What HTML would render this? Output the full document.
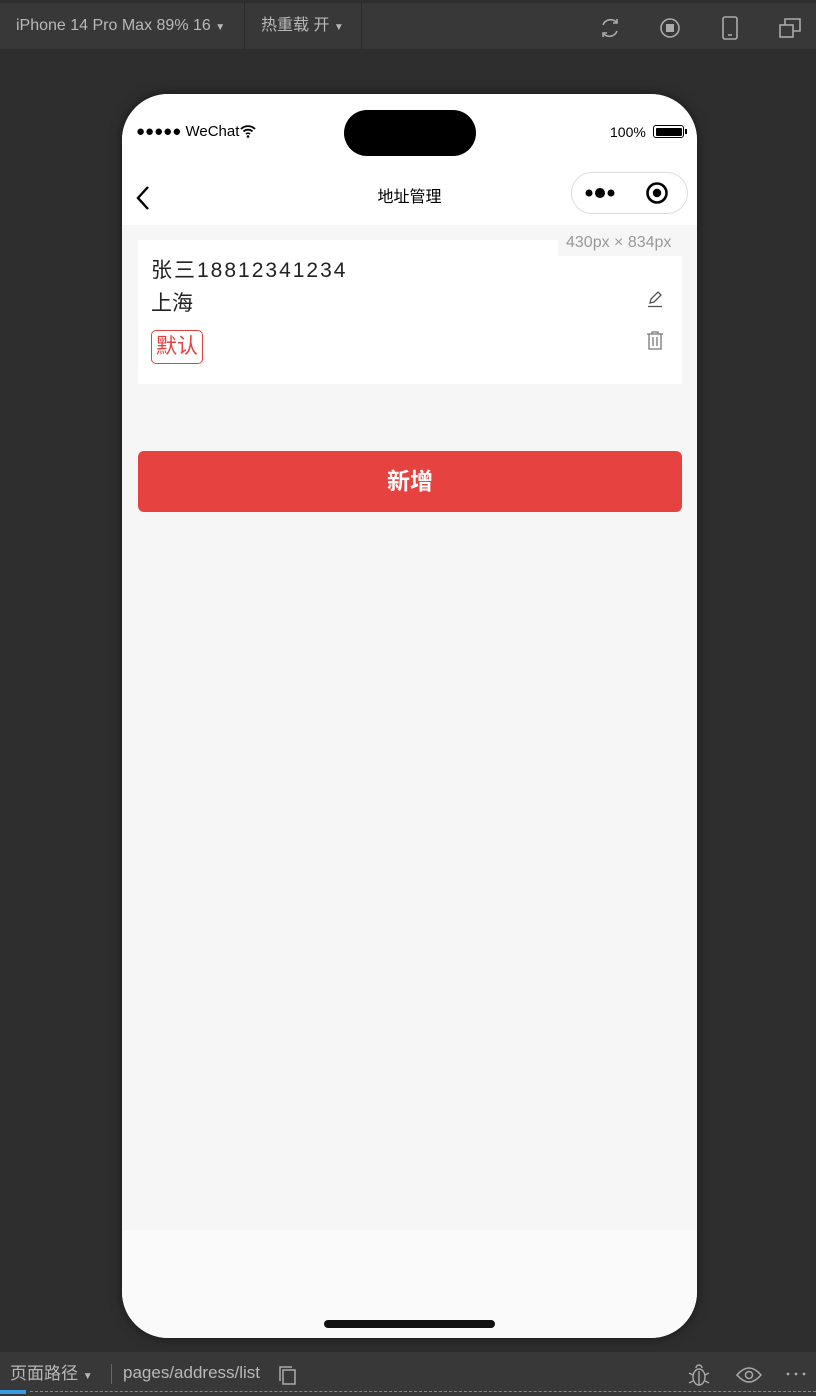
<!DOCTYPE html>
<html><head><meta charset="utf-8"><style>
*{margin:0;padding:0;box-sizing:border-box}
body{width:816px;height:1396px;background:#2e2e2e;position:relative;overflow:hidden;font-family:"Liberation Sans","Noto Sans CJK SC",sans-serif}
.top{position:absolute;left:0;top:3px;width:816px;height:46px;background:#383838;color:#b8b8b8;font-size:16px}
.top .sep{position:absolute;top:0;width:1px;height:46px;background:#2c2c2c}
.phone{position:absolute;left:122px;top:94px;width:575px;height:1244px;border-radius:46px;background:#f6f6f6;overflow:hidden;box-shadow:0 0 12px rgba(0,0,0,.5)}
.abs{position:absolute;line-height:1.2}
.bot{position:absolute;left:0;top:1352px;width:816px;height:44px;background:#383838;color:#b8b8b8;font-size:17px}
</style></head><body>
<div class="top">
<span class="abs" style="left:16px;top:13px">iPhone 14 Pro Max 89% 16 <span style="font-size:10px">▼</span></span>
<div class="sep" style="left:244px"></div>
<span class="abs" style="left:261px;top:13px">热重载 开 <span style="font-size:10px">▼</span></span>
<div class="sep" style="left:361px"></div>
<svg class="abs" style="left:598px;top:13px" width="24" height="24" viewBox="0 0 24 24" fill="none" stroke="#aaa" stroke-width="1.6"><path d="M5 9a8 8 0 0 1 14-2M19 15a8 8 0 0 1-14 2"/><path d="M19 3v4h-4M5 21v-4h4"/></svg>
<svg class="abs" style="left:658px;top:13px" width="24" height="24" viewBox="0 0 24 24"><circle cx="12" cy="12" r="9" fill="none" stroke="#aaa" stroke-width="1.6"/><rect x="8" y="8" width="8" height="8" fill="#aaa"/></svg>
<svg class="abs" style="left:718px;top:12px" width="24" height="26" viewBox="0 0 24 26" fill="none" stroke="#aaa" stroke-width="1.6"><rect x="5" y="2" width="14" height="22" rx="2"/><path d="M10 20h4"/></svg>
<svg class="abs" style="left:778px;top:13px" width="24" height="24" viewBox="0 0 24 24" fill="none" stroke="#aaa" stroke-width="1.6"><rect x="2" y="9" width="13" height="12"/><path d="M7 9V3h15v12h-7"/></svg>
</div>

<div class="phone">
<div class="abs" style="left:0;top:0;width:575px;height:131px;background:#fff"></div>
<div class="abs" style="left:0;top:1136px;width:575px;height:108px;background:#fafafa"></div>
<div class="abs" style="left:222px;top:16px;width:132px;height:46px;border-radius:23px;background:#000"></div>
<span class="abs" style="left:14px;top:29px;font-size:15px;color:#000">●●●●● WeChat</span>
<svg class="abs" style="left:118px;top:31px" width="16" height="13" viewBox="0 0 16 13"><path d="M1 4a10 10 0 0 1 14 0M3.5 6.5a6.5 6.5 0 0 1 9 0M6 9a3 3 0 0 1 4 0" fill="none" stroke="#000" stroke-width="1.8"/><circle cx="8" cy="11.5" r="1.3"/></svg>
<span class="abs" style="left:488px;top:30px;font-size:14px;color:#000">100%</span>
<div class="abs" style="left:531px;top:31px;width:31px;height:13px;border:1.5px solid #000;border-radius:3px;padding:1.5px"><div style="width:100%;height:100%;background:#000;border-radius:1px"></div></div>
<div class="abs" style="left:563px;top:35px;width:2px;height:5px;background:#000"></div>
<svg class="abs" style="left:13px;top:91px" width="16" height="26" viewBox="0 0 16 26"><path d="M13 2L3 13l10 11" fill="none" stroke="#000" stroke-width="2.4"/></svg>
<span class="abs" style="left:0;width:575px;text-align:center;top:94px;font-size:16px;color:#000">地址管理</span>
<div class="abs" style="left:449px;top:78px;width:117px;height:42px;border:1px solid #ddd;border-radius:21px;background:#fff"></div>
<svg class="abs" style="left:462px;top:92px" width="34" height="14"><circle cx="5" cy="7" r="3.5"/><circle cx="16" cy="7" r="5"/><circle cx="27" cy="7" r="3.5"/></svg>
<svg class="abs" style="left:523px;top:87px" width="24" height="24"><circle cx="12" cy="12" r="9.5" fill="none" stroke="#000" stroke-width="2.6"/><circle cx="12" cy="12" r="4.2"/></svg>

<div class="abs" style="left:16px;top:146px;width:544px;height:144px;background:#fff"></div>
<div class="abs" style="left:436px;top:132px;width:139px;height:30px;background:#f6f6f6"></div>
<span class="abs" style="left:444px;top:139px;font-size:16px;color:#999">430px × 834px</span>
<span class="abs" style="left:29px;top:164px;font-size:21px;color:#222;letter-spacing:2px">张三18812341234</span>
<span class="abs" style="left:29px;top:197px;font-size:21px;color:#222">上海</span>
<div class="abs" style="left:29px;top:236px;width:52px;height:34px;border:1px solid #e64340;border-radius:5px;color:#e64340;font-size:21px;line-height:31px;text-align:center">默认</div>
<svg class="abs" style="left:524px;top:196px" width="18" height="18" viewBox="0 0 18 18" fill="none" stroke="#555" stroke-width="1.3"><path d="M4 13l1-4 7-7 3 3-7 7z"/><path d="M2 16.5h14"/></svg>
<svg class="abs" style="left:524px;top:236px" width="18" height="20" viewBox="0 0 18 20" fill="none" stroke="#777" stroke-width="1.3"><path d="M1 4h16M6 4V2h6v2M3 4v15h12V4M7 7v9M11 7v9"/></svg>

<div class="abs" style="left:16px;top:357px;width:544px;height:61px;background:#e64340;border-radius:6px;color:#fff;font-size:23px;font-weight:bold;text-align:center;line-height:61px">新增</div>
<div class="abs" style="left:202px;top:1226px;width:171px;height:8px;border-radius:4px;background:#111"></div>
</div>

<div class="bot">
<span class="abs" style="left:10px;top:12px">页面路径 <span style="font-size:10px">▼</span></span>
<div class="abs" style="left:111px;top:12px;width:1px;height:20px;background:#666"></div>
<span class="abs" style="left:123px;top:11px">pages/address/list</span>
<svg class="abs" style="left:278px;top:13px" width="20" height="20" fill="none" stroke="#aaa" stroke-width="1.5"><rect x="5" y="5" width="12" height="14"/><path d="M2 16V2h12"/></svg>
<svg class="abs" style="left:686px;top:10px" width="26" height="26" viewBox="0 0 26 26" fill="none" stroke="#aaa" stroke-width="1.4"><ellipse cx="13" cy="15" rx="6" ry="8"/><path d="M10 6a3 3 0 0 1 6 0M13 9v14M3 11l4 2M23 11l-4 2M3 21l4-2M23 21l-4-2"/></svg>
<svg class="abs" style="left:736px;top:14px" width="26" height="18" viewBox="0 0 26 18" fill="none" stroke="#aaa" stroke-width="1.5"><path d="M1 9q12-14 24 0q-12 14-24 0z"/><circle cx="13" cy="9" r="3.5"/></svg>
<svg class="abs" style="left:786px;top:20px" width="20" height="4"><circle cx="2" cy="2" r="1.4" fill="#aaa"/><circle cx="10" cy="2" r="1.4" fill="#aaa"/><circle cx="18" cy="2" r="1.4" fill="#aaa"/></svg>
<div class="abs" style="left:0;top:38px;width:26px;height:4px;background:#3a9be0"></div>
<div class="abs" style="left:30px;top:39px;width:786px;height:0;border-top:1.5px dashed #3a9be0"></div>
</div>
</body></html>
